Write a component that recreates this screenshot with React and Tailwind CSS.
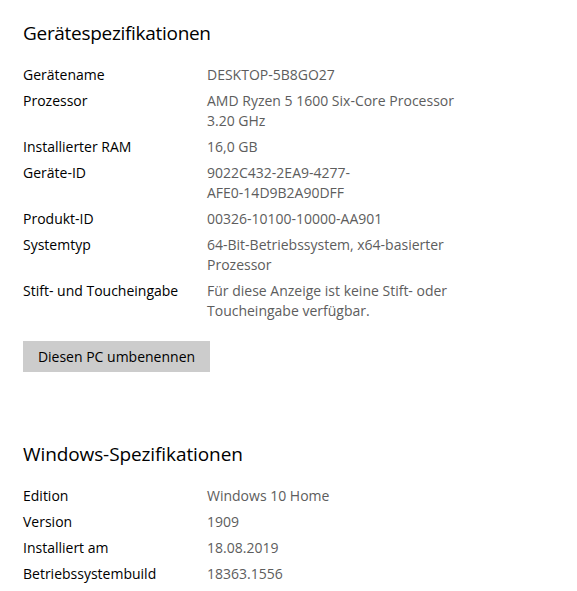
const device = [
  ['Gerätename', ['DESKTOP-5B8GO27']],
  ['Prozessor', ['AMD Ryzen 5 1600 Six-Core Processor', '3.20 GHz']],
  ['Installierter RAM', ['16,0 GB']],
  ['Geräte-ID', ['9022C432-2EA9-4277-', 'AFE0-14D9B2A90DFF']],
  ['Produkt-ID', ['00326-10100-10000-AA901']],
  ['Systemtyp', ['64-Bit-Betriebssystem, x64-basierter', 'Prozessor']],
  ['Stift- und Toucheingabe', ['Für diese Anzeige ist keine Stift- oder', 'Toucheingabe verfügbar.']],
]

const windows = [
  ['Edition', ['Windows 10 Home']],
  ['Version', ['1909']],
  ['Installiert am', ['18.08.2019']],
  ['Betriebssystembuild', ['18363.1556']],
]

const SpecRows = ({ rows }) => (
  <div className="flex flex-col gap-[6px]">
    {rows.map(([label, value]) => (
      <div key={label} className="grid grid-cols-[184px_1fr] text-[14px] leading-[20px]">
        <div className="text-[#000000]">{label}</div>
        <div className="text-[#5d5d5d]">
          {value.map((line) => (
            <div key={line}>{line}</div>
          ))}
        </div>
      </div>
    ))}
  </div>
)

export default function App() {
  return (
    <div className="min-h-[591px] w-[577px] bg-white px-[23px] pt-[19px] font-['Open_Sans',sans-serif]">
      <h2 className="text-[19px] leading-[28px] tracking-[-0.3px] text-black">Gerätespezifikationen</h2>
      <div className="mt-[18px]">
        <SpecRows rows={device} />
      </div>
      <button className="mt-[20px] h-[31px] w-[187px] bg-[#cccccc] text-[14px] text-black">
        Diesen PC umbenennen
      </button>
      <h2 className="mt-[68px] text-[19px] leading-[28px] tracking-[-0.1px] text-black">Windows-Spezifikationen</h2>
      <div className="mt-[18px]">
        <SpecRows rows={windows} />
      </div>
    </div>
  )
}
